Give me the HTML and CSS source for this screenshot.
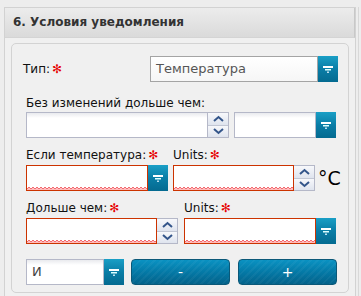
FILE: index.html
```html
<!DOCTYPE html>
<html lang="ru">
<head>
  <meta charset="UTF-8">
  <title>Условия уведомления</title>
  <link rel="stylesheet" href="styles.css">
</head>
<body>
<div class="page">
  <div class="panel">
    <div class="panel-head">6. Условия уведомления</div>
    <div class="panel-body">
      <div class="box">

        <div class="row row-type">
          <span class="lbl lbl-type">Тип:<i class="req">✻</i></span>
          <div class="combo w-type">
            <div class="field field-plain">Температура</div>
            <div class="trigger"><svg width="10" height="7" viewBox="0 0 10 7"><rect x="0" y="0" width="10" height="2" fill="#fff"/><rect x="2" y="3" width="6" height="1.5" fill="#dff"/><rect x="4" y="5.5" width="2" height="1.5" fill="#bde"/></svg></div>
          </div>
        </div>

        <div class="lbl lbl-line">Без изменений дольше чем:</div>
        <div class="row">
          <div class="combo w-num1">
            <div class="field"></div>
            <div class="spin">
              <span><svg width="13" height="9" viewBox="0 0 13 9"><polyline points="2,7 6.5,3 11,7" fill="none" stroke="#33558a" stroke-width="2"/></svg></span>
              <span><svg width="13" height="9" viewBox="0 0 13 9"><polyline points="2,2 6.5,6 11,2" fill="none" stroke="#33558a" stroke-width="2"/></svg></span>
            </div>
          </div>
          <div class="combo w-sel1">
            <div class="field"></div>
            <div class="trigger"><svg width="10" height="7" viewBox="0 0 10 7"><rect x="0" y="0" width="10" height="2" fill="#fff"/><rect x="2" y="3" width="6" height="1.5" fill="#dff"/><rect x="4" y="5.5" width="2" height="1.5" fill="#bde"/></svg></div>
          </div>
        </div>

        <div class="lbl-row lbl-row3">
          <span class="lbl col-a">Если температура:<i class="req">✻</i></span>
          <span class="lbl">Units:<i class="req">✻</i></span>
        </div>
        <div class="row">
          <div class="combo w-temp">
            <div class="field invalid"></div>
            <div class="trigger"><svg width="10" height="7" viewBox="0 0 10 7"><rect x="0" y="0" width="10" height="2" fill="#fff"/><rect x="2" y="3" width="6" height="1.5" fill="#dff"/><rect x="4" y="5.5" width="2" height="1.5" fill="#bde"/></svg></div>
          </div>
          <div class="combo w-units1">
            <div class="field invalid"></div>
            <div class="spin">
              <span><svg width="13" height="9" viewBox="0 0 13 9"><polyline points="2,7 6.5,3 11,7" fill="none" stroke="#33558a" stroke-width="2"/></svg></span>
              <span><svg width="13" height="9" viewBox="0 0 13 9"><polyline points="2,2 6.5,6 11,2" fill="none" stroke="#33558a" stroke-width="2"/></svg></span>
            </div>
          </div>
          <span class="unit">°C</span>
        </div>

        <div class="lbl-row">
          <span class="lbl col-b">Дольше чем:<i class="req">✻</i></span>
          <span class="lbl">Units:<i class="req">✻</i></span>
        </div>
        <div class="row">
          <div class="combo w-num2">
            <div class="field invalid"></div>
            <div class="spin">
              <span><svg width="13" height="9" viewBox="0 0 13 9"><polyline points="2,7 6.5,3 11,7" fill="none" stroke="#33558a" stroke-width="2"/></svg></span>
              <span><svg width="13" height="9" viewBox="0 0 13 9"><polyline points="2,2 6.5,6 11,2" fill="none" stroke="#33558a" stroke-width="2"/></svg></span>
            </div>
          </div>
          <div class="combo w-units2">
            <div class="field invalid"></div>
            <div class="trigger"><svg width="10" height="7" viewBox="0 0 10 7"><rect x="0" y="0" width="10" height="2" fill="#fff"/><rect x="2" y="3" width="6" height="1.5" fill="#dff"/><rect x="4" y="5.5" width="2" height="1.5" fill="#bde"/></svg></div>
          </div>
        </div>

        <div class="row row-btns">
          <div class="combo w-and">
            <div class="field field-txt">И</div>
            <div class="trigger"><svg width="10" height="7" viewBox="0 0 10 7"><rect x="0" y="0" width="10" height="2" fill="#fff"/><rect x="2" y="3" width="6" height="1.5" fill="#dff"/><rect x="4" y="5.5" width="2" height="1.5" fill="#bde"/></svg></div>
          </div>
          <button class="btn btn-minus">-</button>
          <button class="btn btn-plus">+</button>
        </div>

      </div>
    </div>
  </div>
  <div class="side"></div>
</div>
</body>
</html>
```

FILE: styles.css
```css
* {
    box-sizing: border-box;
}

body {
    margin: 0;
    background-color: #ededed;
    font-family: "DejaVu Sans", Verdana, sans-serif;
    font-size: 12px;
    color: #111;
}

.page {
    display: flex;
    padding-top: 7px;
    height: 296px;
}

.panel {
    margin-left: 4px;
    width: 352px;
    border: 1px solid #d2d2d2;
    border-bottom: none;
    background-color: #f0f0f0;
}

.panel-head {
    height: 30px;
    padding-left: 8px;
    line-height: 29px;
    font-weight: bold;
    font-size: 12px;
    color: #333;
    background: linear-gradient(#ececec, #dadada);
    border-bottom: 1px solid #d4d4d4;
    border-right: 1px solid #c8c8c8;
}

.panel-body {
    padding: 5px 6px 0 6px;
}

.box {
    height: 250px;
    border: 1px solid #d3d3d3;
    border-radius: 5px;
    padding: 12px 0 0 14px;
    background-color: #f0f0f0;
}

.side {
    margin-left: 2px;
    flex: 1;
    border-left: 1px solid #d8d8d8;
}

/* rows */

.row {
    display: flex;
    align-items: center;
    height: 26px;
}

.lbl {
    white-space: nowrap;
    line-height: 16px;
}

.lbl-type {
    width: 127px;
    margin-left: -3px;
}

.lbl-line {
    margin-top: 13px;
    margin-bottom: 1px;
}

.lbl-row {
    display: flex;
    margin-top: 9px;
    margin-bottom: 2px;
}

.col-a {
    width: 147px;
}

.col-b {
    width: 158px;
}

.req {
    font-style: normal;
    color: #e60000;
    font-size: 12px;
    margin-left: 2px;
}

.row-btns {
    margin-top: 15px;
}

/* fields */

.combo {
    display: flex;
    height: 26px;
}

.field {
    flex: 1;
    height: 26px;
    border: 1px solid #b5b8c8;
    background: linear-gradient(#e9eaee, #fff 5px, #fff);
}

.field-plain {
    border-color: #a4a4a4;
    background: linear-gradient(#fff, #f6f6f6);
    color: #555;
    font-size: 13px;
    padding-left: 5px;
    line-height: 23px;
}

.field-txt {
    color: #444;
    font-size: 13px;
    padding-left: 5px;
    line-height: 23px;
}

.invalid {
    border-color: #cc3300;
    background: #fff url("data:image/svg+xml,%3Csvg xmlns='http://www.w3.org/2000/svg' width='4' height='4'%3E%3Cpath d='M0 4 L0 3 L2 1 L4 3 L4 4 Z' fill='%23fbb'/%3E%3Cpath d='M0 3 L2 1 L4 3' fill='none' stroke='%23f26a70' stroke-width='1'/%3E%3C/svg%3E") repeat-x left bottom;
}

.trigger {
    width: 20px;
    display: flex;
    align-items: center;
    justify-content: center;
    background: linear-gradient(#1a9fc6, #0a7da6 50%, #046a90);
}

.spin {
    width: 21px;
    display: flex;
    flex-direction: column;
    border: 1px solid #b5b8c8;
    border-left: none;
}

.spin span {
    flex: 1;
    display: flex;
    align-items: center;
    justify-content: center;
    background: linear-gradient(#f7f8fb, #dfe4ee);
}

.spin span + span {
    border-top: 1px solid #c2c7d4;
}

.w-type {
    width: 188px;
}

.w-num1 {
    width: 203px;
}

.w-sel1 {
    width: 102px;
    margin-left: 5px;
}

.w-temp {
    width: 142px;
}

.w-units1 {
    width: 142px;
    margin-left: 5px;
}

.unit {
    margin-left: 3px;
    font-size: 19px;
    color: #000;
}

.w-num2 {
    width: 152px;
}

.w-units2 {
    width: 152px;
    margin-left: 6px;
}

.w-and {
    width: 98px;
}

/* buttons */

.btn {
    width: 99px;
    height: 26px;
    padding: 0;
    border: 1px solid #0b5878;
    border-radius: 4px;
    color: #fff;
    font-family: "DejaVu Sans", Verdana, sans-serif;
    font-size: 14px;
    background:
        repeating-linear-gradient(135deg, rgba(255,255,255,0.04) 0 2px, transparent 2px 5px),
        linear-gradient(#0a92c2, #0479a6 50%, #03628a);
}

.btn-minus {
    margin-left: 7px;
}

.btn-plus {
    margin-left: 8px;
}
```
